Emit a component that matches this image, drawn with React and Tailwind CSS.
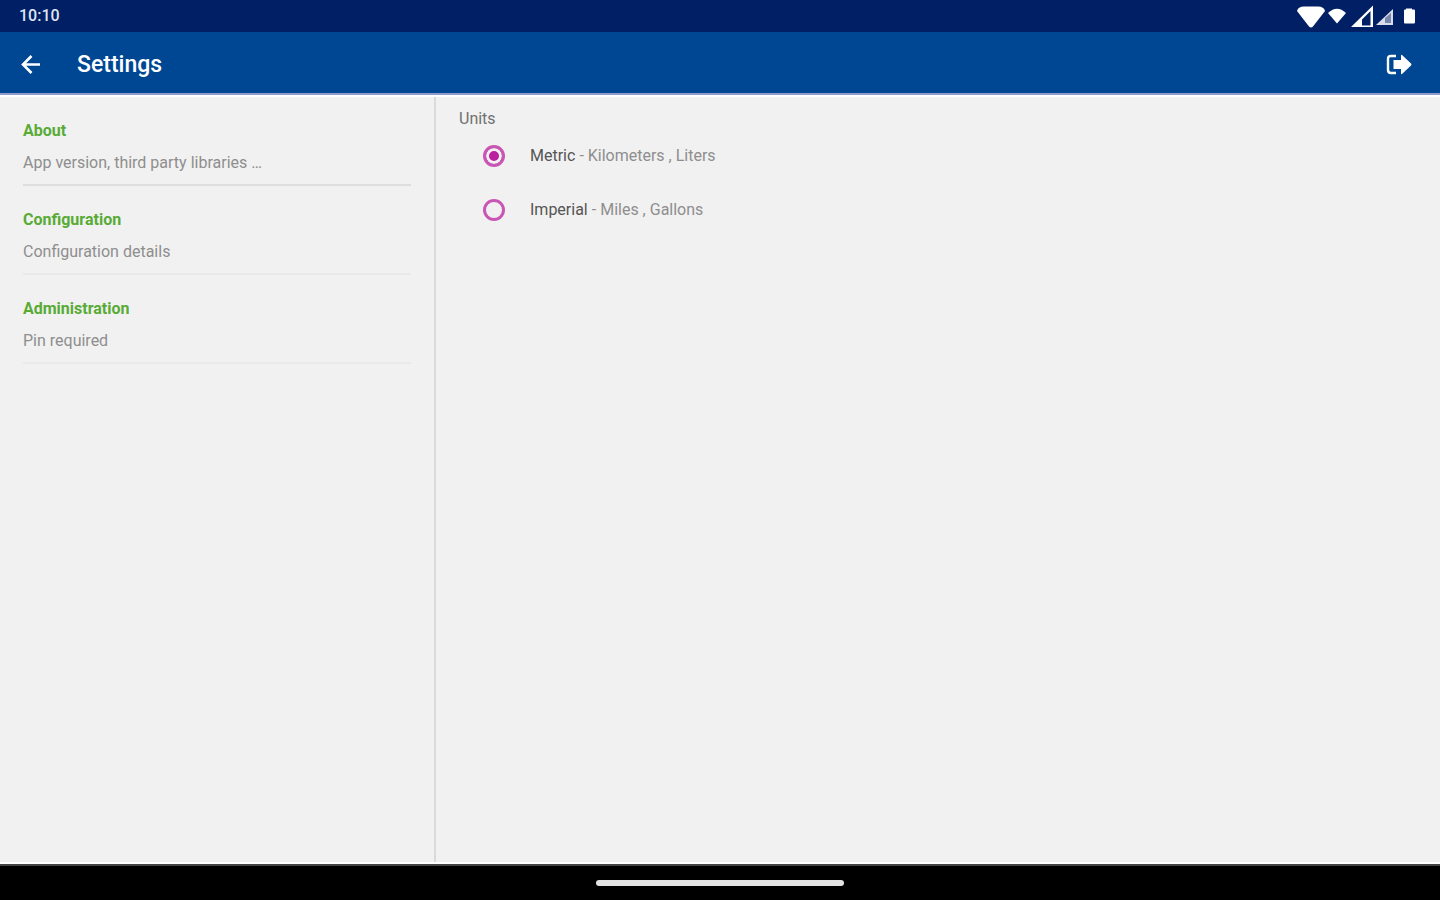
import { useState } from "react";

const sections = [
  { title: "About", detail: "App version, third party libraries …", border: "border-[#dedede]" },
  { title: "Configuration", detail: "Configuration details", border: "border-[#e9e9e9]" },
  { title: "Administration", detail: "Pin required", border: "border-[#e9e9e9]" },
];

const units = [
  { id: "metric", name: "Metric", detail: "- Kilometers , Liters" },
  { id: "imperial", name: "Imperial", detail: "- Miles , Gallons" },
];

function StatusIcons() {
  return (
    <svg className="h-8 w-30" viewBox="0 0 120 32" fill="#fff" aria-hidden="true">
      <path d="M1 11 Q2 6.500 8 6.500 H22 Q28 6.500 29 11 L17 26.500 Q15 28.500 13 26.500 Z" />
      <path d="M32 13 Q41 4.500 50 13 L41 23.500 Z" />
      <path d="M55 27 L77 5.500 V27 Z M66 25.500 H74.500 V11 L66 19.500 Z" fillRule="evenodd" />
      <path d="M80 25 L97 9 V25 Z" fillOpacity="0.850" />
      <path d="M89 23 V18 L95 13 V23 Z" fill="#001f65" fillOpacity="0.450" />
      <path d="M108 10.500 Q108 9.500 109 9.500 H110 V8.500 H116 V9.500 H118 Q119 9.500 119 10.500 V22 Q119 23.500 118 23.500 H109 Q108 23.500 108 22.500 Z" />
    </svg>
  );
}

export default function App() {
  const [unit, setUnit] = useState("metric");

  return (
    <div className="flex min-h-screen flex-col bg-[#f1f1f1] font-['Roboto',sans-serif]">
      <div className="flex h-8 items-center justify-between bg-[#001f65] pr-6 pl-[19px] text-[#dfe4f2]">
        <span className="text-base font-medium">10:10</span>
        <StatusIcons />
      </div>

      <header className="flex h-[63px] items-center border-b-2 border-[#8f9bcb] bg-[#004793] px-[21px] pt-1 text-white">
        <button type="button" aria-label="Back" className="flex size-6 items-center">
          <svg className="size-5" viewBox="0 0 20 20" fill="none" stroke="currentColor" strokeWidth="2.600" aria-hidden="true">
            <path d="M19 9.500 H3 M10.500 1 L2 9.500 L10.500 18" />
          </svg>
        </button>
        <h1 className="ml-8 text-[23px] leading-8 font-medium">Settings</h1>
        <button type="button" aria-label="Log out" className="mr-[7px] ml-auto">
          <svg className="h-[22px] w-[26px]" viewBox="0 0 26 22" fill="currentColor" aria-hidden="true">
            <path d="M10 2 H5 Q2 2 2 5 V16 Q2 19 5 19 H10" fill="none" stroke="currentColor" strokeWidth="2.400" />
            <path d="M7.500 6 H15 V1.500 Q15 0.500 16 1 L25 9.500 Q26 10.500 25 11.500 L16 20 Q15 20.500 15 19.500 V15 H7.500 Z" />
          </svg>
        </button>
      </header>

      <div className="flex flex-1 border-y-2 border-white">
        <nav className="w-[436px] shrink-0 border-r-2 border-[#dadada] px-[23px]">
          {sections.map((s) => (
            <a key={s.title} href={"#" + s.title.toLowerCase()} className={"flex h-[89px] flex-col justify-end border-b-2 pb-[11px] " + s.border}>
              <span className="text-base leading-5 font-bold text-[#58ab35]">{s.title}</span>
              <span className="mt-3 text-base leading-5 text-[#8e8e8e]">{s.detail}</span>
            </a>
          ))}
        </nav>

        <main className="flex-1 px-[23px]">
          <fieldset>
            <legend className="pt-3 text-base leading-5 text-[#707070]">Units</legend>
            {units.map((u) => (
              <label key={u.id} htmlFor={u.id} className="flex h-[54px] items-center pl-6 text-base text-[#8e8e8e]">
                <input
                  id={u.id}
                  type="radio"
                  name="units"
                  checked={unit === u.id}
                  onChange={() => setUnit(u.id)}
                  className="mr-[25px] size-[22px] appearance-none rounded-full border-3 border-[#c955b4] checked:bg-[#ba1f9f] checked:shadow-[inset_0_0_0_3px_#f1f1f1]"
                />
                <span className="mr-1 text-[#555]">{u.name}</span>
                <span>{u.detail}</span>
              </label>
            ))}
          </fieldset>
        </main>
      </div>

      <footer className="flex h-9 items-center justify-center border-t-2 border-[#444] bg-black">
        <div className="h-[6px] w-[248px] rounded-full bg-[#e2e2e2]" />
      </footer>
    </div>
  );
}
